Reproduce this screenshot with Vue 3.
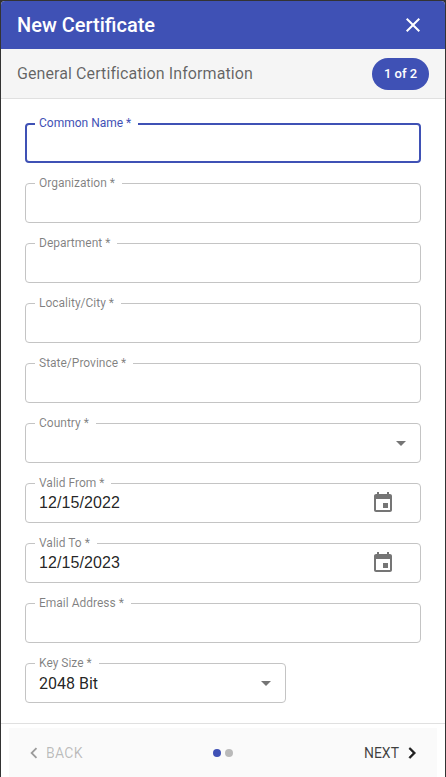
<script setup>
const fields = [
  { label: 'Organization *' },
  { label: 'Department *' },
  { label: 'Locality/City *' },
  { label: 'State/Province *' },
  { label: 'Country *', kind: 'select' },
  { label: 'Valid From *', value: '12/15/2022', kind: 'date' },
  { label: 'Valid To *', value: '12/15/2023', kind: 'date' },
  { label: 'Email Address *' },
]
</script>

<template>
  <div class="dialog">
    <header class="title">
      <h1>New Certificate</h1>
      <svg class="close" viewBox="0 0 24 24" width="24" height="24"><path fill="#fff" d="M19 6.41 17.59 5 12 10.59 6.41 5 5 6.41 10.59 12 5 17.59 6.41 19 12 13.41 17.59 19 19 17.59 13.41 12z"/></svg>
    </header>
    <div class="sub">
      <span class="sub-text">General Certification Information</span>
      <span class="pill">1 of 2</span>
    </div>
    <form class="form">
      <div class="field focused">
        <label>Common Name *</label>
      </div>
      <div v-for="f in fields" :key="f.label" class="field">
        <label>{{ f.label }}</label>
        <span class="value date">{{ f.value }}</span>
        <svg v-if="f.kind === 'select'" class="arrow" viewBox="0 0 24 24" width="24" height="24"><path d="M7 10l5 5 5-5z"/></svg>
        <svg v-if="f.kind === 'date'" class="cal" viewBox="0 0 24 24" width="24" height="24"><path d="M17 12h-5v5h5v-5zM16 1v2H8V1H6v2H5c-1.11 0-1.99.9-1.99 2L3 19c0 1.1.89 2 2 2h14c1.1 0 2-.9 2-2V5c0-1.1-.9-2-2-2h-1V1h-2zm3 18H5V8h14v11z"/></svg>
      </div>
      <div class="field short">
        <label>Key Size *</label>
        <span class="value">2048 Bit</span>
        <svg class="arrow" viewBox="0 0 24 24" width="24" height="24"><path d="M7 10l5 5 5-5z"/></svg>
      </div>
    </form>
    <footer class="footer">
      <div class="stepper">
        <span class="btn back">
          <svg viewBox="0 0 24 24" width="22" height="22"><path d="M15.41 7.41 14 6l-6 6 6 6 1.41-1.41L10.83 12z"/></svg>
          <span>BACK</span>
        </span>
        <span class="dots"><i class="on"></i><i></i></span>
        <span class="btn next">
          <span>NEXT</span>
          <svg viewBox="0 0 24 24" width="22" height="22"><path d="M10 6 8.59 7.41 13.17 12l-4.58 4.59L10 18l6-6z"/></svg>
        </span>
      </div>
    </footer>
  </div>
</template>

<style>
html, body { margin: 0; background: #333; }
</style>

<style scoped>
.dialog {
  box-sizing: border-box;
  width: 444px;
  height: 776px;
  margin: 1px 0 0 1px;
  background: #fff;
  border-radius: 4px 4px 0 0;
  overflow: hidden;
  display: flex;
  flex-direction: column;
  font-family: Roboto, "Liberation Sans", sans-serif;
}
.title {
  height: 48px;
  flex: none;
  background: #3f51b5;
  color: #fff;
  display: flex;
  align-items: center;
  justify-content: space-between;
  padding: 0 20px 0 16px;
}
.title h1 { margin: 0; font-size: 20px; font-weight: 500; }
.sub {
  height: 50px;
  flex: none;
  box-sizing: border-box;
  background: #f5f5f5;
  border-bottom: 1px solid #e0e0e0;
  display: flex;
  align-items: center;
  justify-content: space-between;
  padding: 0 16px;
}
.sub-text { font-size: 16px; color: rgba(0,0,0,.6); letter-spacing: .09px; }
.pill {
  width: 57px;
  height: 32px;
  border-radius: 16px;
  background: #3f51b5;
  color: #fff;
  font-size: 13px;
  font-weight: 500;
  display: flex;
  align-items: center;
  justify-content: center;
}
.form {
  flex: 1;
  padding: 24px 24px 0;
  display: flex;
  flex-direction: column;
  gap: 20px;
}
.field {
  position: relative;
  box-sizing: border-box;
  height: 40px;
  width: 396px;
  border: 1px solid #c4c4c4;
  border-radius: 4px;
  display: flex;
  align-items: center;
  padding-left: 13px;
}
.field label {
  position: absolute;
  top: -8px;
  left: 9px;
  padding: 0 7px 0 4px;
  background: #fff;
  font-size: 12px;
  line-height: 14px;
  color: rgba(0,0,0,.5);
  white-space: nowrap;
}
.field.focused { border: 2px solid #3f51b5; }
.field.focused label { color: #3f51b5; left: 8px; top: -9px; }
.field.short { width: 261px; }
.value { font-size: 16px; color: rgba(0,0,0,.87); }
.value.date { font-family: "Liberation Sans", Arial, sans-serif; letter-spacing: .1px; }
.arrow { position: absolute; right: 7px; top: 7px; fill: rgba(0,0,0,.54); }
.cal { position: absolute; right: 25px; top: 7px; fill: rgba(0,0,0,.54); }
.footer {
  height: 54px;
  flex: none;
  box-sizing: border-box;
  border-top: 1px solid #e0e0e0;
  padding: 4px 8px 0;
}
.stepper {
  height: 100%;
  background: #fafafa;
  display: grid;
  grid-template-columns: 1fr auto 1fr;
  align-items: center;
  padding: 0 14px;
}
.btn { display: flex; align-items: center; font-size: 14px; gap: 2px; }
.btn svg { flex: none; }
.back { color: rgba(0,0,0,.26); fill: rgba(0,0,0,.38); letter-spacing: .25px; gap: 1px; }
.next { color: rgba(0,0,0,.75); fill: rgba(0,0,0,.87); justify-content: flex-end; }
.next svg { stroke: rgba(0,0,0,.87); stroke-width: .6; }
.dots { display: flex; gap: 4px; }
.dots i { width: 8px; height: 8px; border-radius: 50%; background: rgba(0,0,0,.26); }
.dots i.on { background: #3f51b5; }
</style>
